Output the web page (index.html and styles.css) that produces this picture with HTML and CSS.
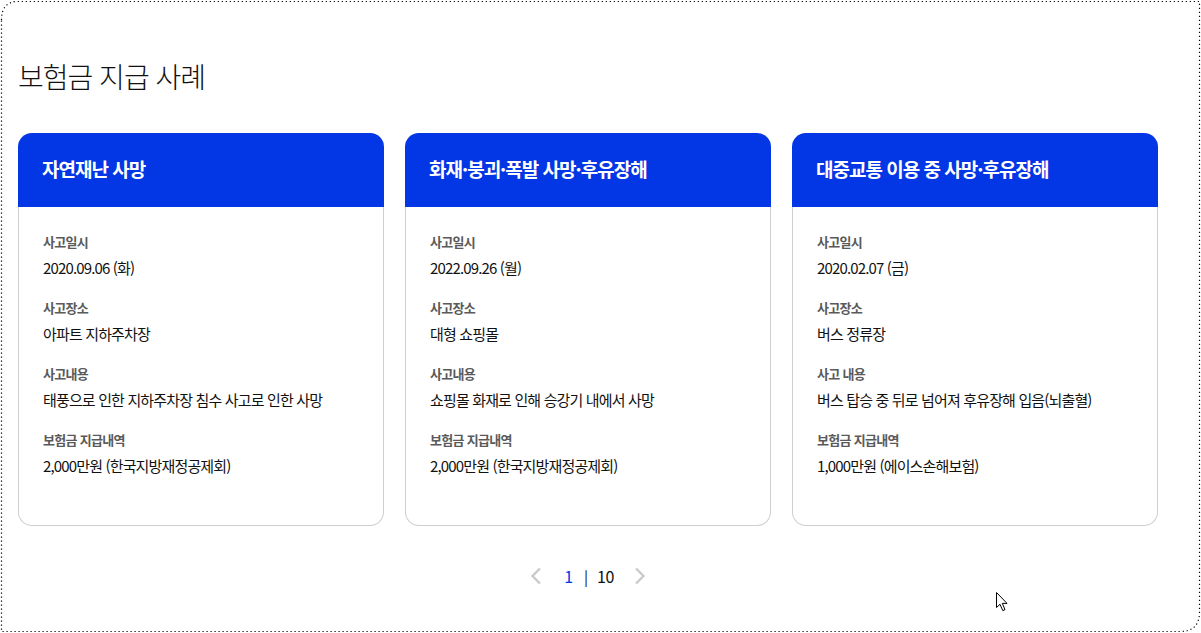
FILE: index.html
```html
<!DOCTYPE html>
<html lang="ko">
<head>
  <meta charset="UTF-8" />
  <meta name="viewport" content="width=device-width, initial-scale=1.0"/>
  <title>보험금 지급 사례</title>
  <link rel="stylesheet" href="styles.css">
</head>
<body>

  <div class="page">
    <h2 class="title">보험금 지급 사례</h2>

    <div class="case-list">
      <div class="case-card">
        <div class="case-head">자연재난 사망</div>
        <dl class="case-body">
          <dt>사고일시</dt>
          <dd>2020.09.06 (화)</dd>
          <dt>사고장소</dt>
          <dd>아파트 지하주차장</dd>
          <dt>사고내용</dt>
          <dd>태풍으로 인한 지하주차장 침수 사고로 인한 사망</dd>
          <dt>보험금 지급내역</dt>
          <dd>2,000만원 (한국지방재정공제회)</dd>
        </dl>
      </div>

      <div class="case-card">
        <div class="case-head">화재·붕괴·폭발 사망·후유장해</div>
        <dl class="case-body">
          <dt>사고일시</dt>
          <dd>2022.09.26 (월)</dd>
          <dt>사고장소</dt>
          <dd>대형 쇼핑몰</dd>
          <dt>사고내용</dt>
          <dd>쇼핑몰 화재로 인해 승강기 내에서 사망</dd>
          <dt>보험금 지급내역</dt>
          <dd>2,000만원 (한국지방재정공제회)</dd>
        </dl>
      </div>

      <div class="case-card">
        <div class="case-head">대중교통 이용 중 사망·후유장해</div>
        <dl class="case-body">
          <dt>사고일시</dt>
          <dd>2020.02.07 (금)</dd>
          <dt>사고장소</dt>
          <dd>버스 정류장</dd>
          <dt>사고 내용</dt>
          <dd>버스 탑승 중 뒤로 넘어져 후유장해 입음(뇌출혈)</dd>
          <dt>보험금 지급내역</dt>
          <dd>1,000만원 (에이스손해보험)</dd>
        </dl>
      </div>
    </div>

    <div class="pager">
      <button class="pager-btn" aria-label="이전">
        <svg width="12" height="18" viewBox="0 0 12 18"><path d="M10 1.5 L2.5 9 L10 16.5" fill="none" stroke="#c9c9ce" stroke-width="2.4"/></svg>
      </button>
      <span class="pager-now">1</span>
      <span class="pager-sep">|</span>
      <span class="pager-total">10</span>
      <button class="pager-btn" aria-label="다음">
        <svg width="12" height="18" viewBox="0 0 12 18"><path d="M2 1.5 L9.5 9 L2 16.5" fill="none" stroke="#c9c9ce" stroke-width="2.4"/></svg>
      </button>
    </div>
  </div>

  <!-- capture frame + mouse pointer -->
  <svg class="frame" width="1201" height="633" viewBox="0 0 1201 633">
    <path d="M1.5 20 Q1.5 1.5 18 1.5 L1199.5 1.5 L1199.5 612 Q1199.5 631.5 1180 631.5 L1.5 631.5 Z"
          fill="none" stroke="#000" stroke-width="1.2" stroke-dasharray="1.2 2.8"/>
  </svg>
  <svg class="cursor" width="14" height="20" viewBox="0 0 14 20">
    <path d="M0.5 0.5 L0.5 15.5 L4 12.3 L6.8 18.6 L9 17.6 L6.3 11.4 L11 11.4 Z" fill="#fff" stroke="#000" stroke-width="1" stroke-linejoin="miter"/>
  </svg>

</body>
</html>
```

FILE: styles.css
```css
* {
  box-sizing: border-box;
}

body {
  margin: 0;
  width: 1201px;
  height: 633px;
  overflow: hidden;
  background: #fff;
  color: #111;
  font-family: "Noto Sans CJK KR", "Noto Sans", sans-serif;
}

.page {
  width: 1140px;
  margin-left: 18px;
  padding-top: 56px;
}

.title {
  margin: 0 0 37px;
  font-size: 28px;
  font-weight: 300;
  line-height: 40px;
  letter-spacing: -1px;
  color: #111;
}

.case-list {
  display: grid;
  grid-template-columns: repeat(3, 1fr);
  gap: 21px;
}

.case-card {
  display: flex;
  flex-direction: column;
  height: 393px;
}

.case-head {
  height: 74px;
  padding: 0 24px 3px;
  display: flex;
  align-items: center;
  background: #0336e4;
  color: #fff;
  font-size: 19px;
  font-weight: 700;
  letter-spacing: -1px;
  border-radius: 14px 14px 0 0;
}

.case-body {
  flex: 1;
  margin: 0;
  padding: 26px 24px 0;
  border: 1px solid #cfcfd3;
  border-top: none;
  border-radius: 0 0 14px 14px;
}

.case-body dt {
  font-size: 13px;
  font-weight: 700;
  line-height: 18px;
  letter-spacing: -0.7px;
  color: #5a5a5a;
}

.case-body dd {
  margin: 6px 0 20px;
  font-size: 15px;
  line-height: 22px;
  letter-spacing: -0.85px;
  color: #111;
}

.pager {
  margin-top: 38px;
  display: flex;
  justify-content: center;
  align-items: center;
  height: 24px;
  font-size: 16px;
  color: #111;
}

.pager-btn {
  display: flex;
  align-items: center;
  padding: 0;
  border: none;
  background: none;
  cursor: pointer;
}

.pager-now {
  margin-left: 22px;
  color: #0336e4;
}

.pager-sep {
  margin: 0 9px 0 11px;
  font-size: 15px;
}

.pager-total {
  margin-right: 20px;
  letter-spacing: -0.5px;
}

.frame {
  position: absolute;
  left: 0;
  top: 0;
  pointer-events: none;
}

.cursor {
  position: absolute;
  left: 996px;
  top: 592px;
  pointer-events: none;
}
```
